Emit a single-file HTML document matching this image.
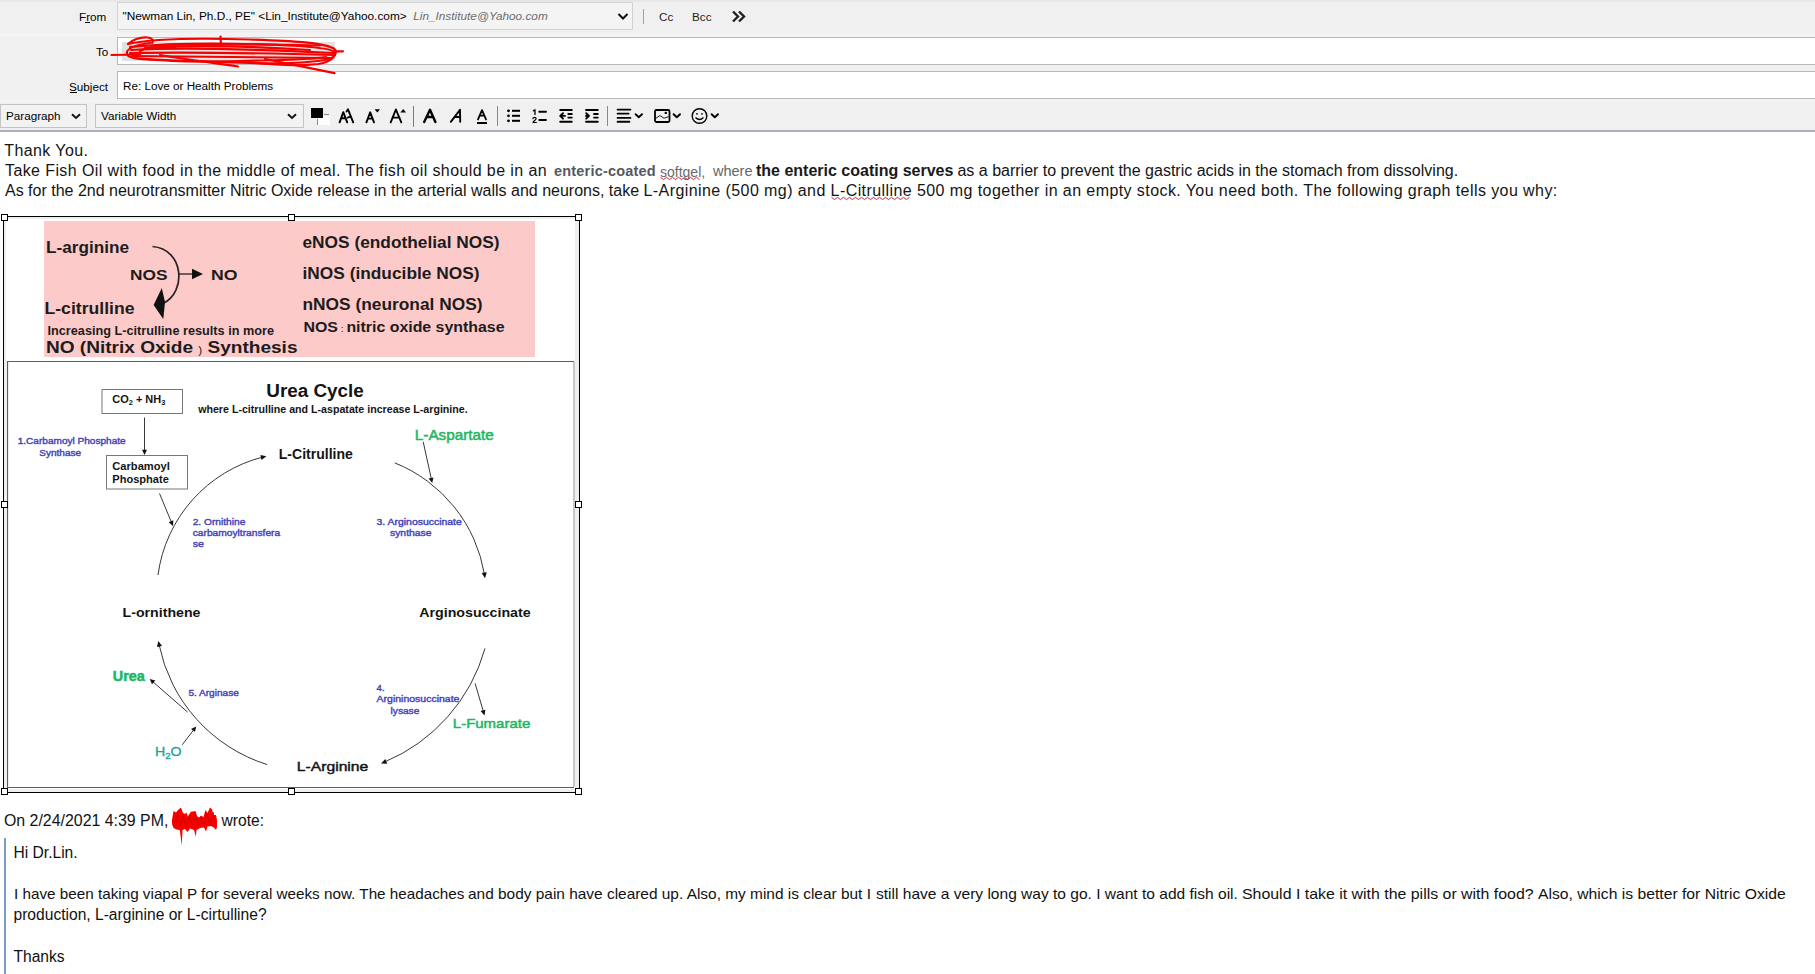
<!DOCTYPE html>
<html><head><meta charset="utf-8">
<style>
*{box-sizing:border-box;margin:0;padding:0}
html,body{width:1815px;height:974px;overflow:hidden;background:#fff;font-family:"Liberation Sans",sans-serif}
.abs{position:absolute;white-space:pre;line-height:1}
#hdr{position:absolute;left:0;top:0;width:1815px;height:131px;background:#f0f0f0}
#hdrline{position:absolute;left:0;top:130px;width:1815px;height:2px;background:#abafba}
.lbl{position:absolute;font-size:11.7px;color:#000;line-height:1;white-space:pre}
.fld{position:absolute;border:1px solid #b9b9b9;background:#fff}
.sel{position:absolute;border:1px solid #c4c4c4;background:#f2f2f2}
.tb{position:absolute}
#body{position:absolute;left:0;top:132px;width:1815px}
.bt{position:absolute;left:5px;font-size:16px;color:#141414;line-height:1;white-space:pre}
.qline{position:absolute;left:0;width:1815px;height:20px}
.qline span{position:absolute;top:0;font-size:15.55px;color:#111;line-height:1;white-space:pre;transform-origin:0 0}
.q{position:absolute;font-size:15.6px;color:#111;line-height:1;white-space:pre}
</style></head><body>
<div id="hdr">
  <div class="abs" style="left:0;top:0;width:1815px;height:2px;background:#e7e7e7"></div>
  <div class="abs" style="left:0;top:33px;width:1815px;height:4px;background:#f3f3f3"></div>
  <div class="abs" style="left:0;top:99px;width:1815px;height:3px;background:#f3f3f3"></div>
  <div class="abs" style="left:0;top:128.5px;width:1815px;height:1.5px;background:#eeeef8"></div>
  <!-- From row -->
  <div class="lbl" style="left:79px;top:11px">From</div>
  <div class="abs" style="left:85px;top:22px;width:5px;height:1px;background:#000"></div>
  <div class="sel" style="left:117px;top:2px;width:516px;height:28px;background:#f4f4f4;border-color:#d2d2d2"></div>
  <div class="lbl" style="left:122.5px;top:11px;font-size:11.82px">"Newman Lin, Ph.D., PE" &lt;Lin_Institute@Yahoo.com&gt;  <span style="font-style:italic;color:#6d6d6d">Lin_Institute@Yahoo.com</span></div>
  <svg class="tb" style="left:617px;top:12px" width="12" height="9" viewBox="0 0 12 9"><path d="M1.5 2 L6 6.5 L10.5 2" fill="none" stroke="#111" stroke-width="2"/></svg>
  <div class="abs" style="left:643px;top:9px;width:1px;height:15px;background:#a0a0a0"></div>
  <div class="lbl" style="left:659px;top:11px;color:#222">Cc</div>
  <div class="lbl" style="left:692px;top:11px;color:#222">Bcc</div>
  <svg class="tb" style="left:731px;top:10px" width="16" height="13" viewBox="0 0 16 13"><path d="M2 1.5 L7 6.5 L2 11.5 M8 1.5 L13 6.5 L8 11.5" fill="none" stroke="#222" stroke-width="2.4"/></svg>
  <!-- To row -->
  <div class="lbl" style="left:96px;top:46px">To</div>
  <div class="fld" style="left:117px;top:37px;width:1710px;height:28px"></div>
  <div class="abs" style="left:122px;top:42px;width:213px;height:19px;background:#e1e1e1"></div>
  
  <!-- Subject row -->
  <div class="lbl" style="left:69px;top:81px">Subject</div>
  <div class="abs" style="left:70px;top:92px;width:7px;height:1px;background:#000"></div>
  <div class="fld" style="left:117px;top:71px;width:1710px;height:28px"></div>
  <div class="lbl" style="left:123px;top:80px">Re: Love or Health Problems</div>
  <!-- Toolbar -->
  <div class="sel" style="left:0px;top:104px;width:87px;height:24px"></div>
  <div class="lbl" style="left:6px;top:110px">Paragraph</div>
  <svg class="tb" style="left:70.5px;top:113px" width="10" height="7" viewBox="0 0 10 7"><path d="M1 1.2 L5 5 L9 1.2" fill="none" stroke="#111" stroke-width="1.9"/></svg>
  <div class="sel" style="left:95px;top:104px;width:209px;height:24px"></div>
  <div class="lbl" style="left:101px;top:110px">Variable Width</div>
  <svg class="tb" style="left:287px;top:113px" width="10" height="7" viewBox="0 0 10 7"><path d="M1 1.2 L5 5 L9 1.2" fill="none" stroke="#111" stroke-width="1.9"/></svg>
  <!-- colour picker -->
  <div class="abs" style="left:318px;top:116px;width:12px;height:9px;background:#fff"></div>
  <div class="abs" style="left:311px;top:108px;width:12px;height:10px;background:#000"></div>
  <div class="abs" style="left:324px;top:114px;width:5px;height:1px;background:#888"></div>
  <div class="abs" style="left:317px;top:119px;width:1px;height:6px;background:#888"></div>
  <svg class="tb" style="left:336px;top:106px" width="400" height="22" viewBox="336 106 400 22">
    <g fill="none" stroke="#000" stroke-linecap="round" stroke-linejoin="round">
      <!-- AA -->
      <path d="M339.6 122.3 L343.3 112.2 L347.2 122.3 M341 118.2 L345.6 118.2" stroke-width="1.9"/>
      <path d="M346.6 111.5 L348 109.3 L353.2 122.3 M347.6 117.6 L349.8 116.9" stroke-width="1.9"/>
      <!-- A down -->
      <path d="M366.4 122.3 L370.2 112.3 L374 122.3 M367.8 118.6 L372.6 118.6" stroke-width="1.9"/>
      <!-- A up -->
      <path d="M390.7 122.3 L395.9 109.5 L401.3 122.3 M392.5 117.6 L399.5 117.6" stroke-width="1.9"/>
      <!-- Bold A -->
      <path d="M424.2 122 L430 109.8 L435.4 122 M427 117 L432.8 117" stroke-width="2.4"/>
      <!-- Italic A -->
      <path d="M450.8 121.8 L460 109.8 L460.2 121.8 M454.6 117 L460 117" stroke-width="1.9"/>
      <!-- Underline A -->
      <path d="M478 119.4 L482 110.2 L486 119.4 M479.6 115.6 L484.4 115.6" stroke-width="1.8"/>
    </g>
    <g fill="#000">
      <path d="M374.6 109.2 L380 109.2 L377.3 112.6 Z"/>
      <path d="M400.3 112.6 L406 112.6 L403.2 108.9 Z"/>
      <rect x="477" y="122.1" width="10" height="1.8" rx="0.5"/>
    </g>
    <rect x="413" y="105.3" width="1" height="21.5" fill="#7a7a7a"/>
    <rect x="497" y="105" width="1" height="21" fill="#888"/>
    <!-- bullet list -->
    <g fill="#000">
      <circle cx="508.5" cy="110.8" r="1.4"/><circle cx="508.5" cy="115.8" r="1.4"/><circle cx="508.5" cy="120.8" r="1.4"/>
      <rect x="512" y="109.8" width="8" height="2"/><rect x="512" y="114.8" width="8" height="2"/><rect x="512" y="119.8" width="8" height="2"/>
    </g>
    <g fill="none" stroke="#000" stroke-linecap="round" stroke-linejoin="round">
      <path d="M533.4 110.9 L535 109.8 L535 114.4" stroke-width="1.3"/>
      <path d="M532.9 118.6 C533.2 117 536.1 117 536.1 118.7 C536.1 120 533.2 121 533 122.5 L536.4 122.5" stroke-width="1.2"/>
      <path d="M539.3 111.8 L546 111.8 M539.3 120 L546 120" stroke-width="1.9"/>
      <path d="M560.2 110 L571.8 110 M568.3 114 L571.8 114 M568.3 117.6 L571.8 117.6 M560.2 121.8 L571.8 121.8" stroke-width="1.9"/>
      <path d="M563 113.2 L560.2 115.9 L563 118.7 M560.5 115.9 L565 115.9" stroke-width="1.9"/>
      <path d="M586 110 L597.8 110 M594 114 L597.8 114 M594 117.6 L597.8 117.6 M586 121.8 L597.8 121.8" stroke-width="1.9"/>
      <path d="M586.2 113.2 L589 115.9 L586.2 118.7 M586 115.9 L588.6 115.9" stroke-width="1.9"/>
    </g>
    <rect x="607" y="105" width="1" height="21" fill="#888"/>
    <!-- align -->
    <g fill="none" stroke="#000" stroke-linecap="round" stroke-width="1.9">
      <path d="M617.6 109.6 L630.4 109.6 M617.6 113.6 L628.6 113.6 M617.6 117.9 L630.4 117.9 M617.6 121.8 L629.4 121.8"/>
      <path d="M635.6 114.2 L638.8 117.2 L642 114.2"/>
    </g>
    <!-- image -->
    <rect x="655" y="110" width="14.5" height="12" rx="1.5" fill="none" stroke="#000" stroke-width="1.8"/>
    <path d="M656 118.2 L659.8 115.6 L664 118.2 L668.8 116.6" fill="none" stroke="#000" stroke-width="0.9"/>
    <circle cx="665.8" cy="112.9" r="1.2" fill="#000"/>
    <path d="M673.6 114.2 L676.8 117.2 L680 114.2" fill="none" stroke="#000" stroke-width="1.9" stroke-linecap="round" stroke-linejoin="round"/>
    <!-- emoji -->
    <circle cx="699.5" cy="116" r="7.3" fill="none" stroke="#000" stroke-width="1.4"/>
    <circle cx="697" cy="113.8" r="0.9" fill="#000"/><circle cx="702" cy="113.8" r="0.9" fill="#000"/>
    <path d="M695.5 117.5 Q699.5 121.5 703.5 117.5" fill="none" stroke="#000" stroke-width="1.3"/>
    <path d="M711.6 114.2 L714.8 117.2 L718 114.2" fill="none" stroke="#000" stroke-width="1.9" stroke-linecap="round" stroke-linejoin="round"/>
  </svg>
<svg class="tb" style="left:105px;top:32px" width="250" height="46" viewBox="105 32 250 46">
    <g fill="none" stroke="#f40000" stroke-width="2.2" stroke-linecap="round" stroke-linejoin="round">
      <path d="M111.5 55 L140 54.5"/>
      <path d="M128 44 C132 40 140 37 147 37.5 C153 38 154 41 152 43"/>
      <path d="M128 44 C150 39 200 38 250 39.5 C290 41 320 42 333 48 C338 51 336 56 330 59 C310 63 280 64 250 63 C200 62 160 61 140 59 C130 58 126 56 127 52 C128 48 135 45 150 43"/>
      <path d="M130 47 C180 42 240 43 300 46 C325 48 333 50 334 52"/>
      <path d="M131 50 C180 47 250 49 334 53"/>
      <path d="M130 53 C190 52 260 53 335 55"/>
      <path d="M132 56 C190 56 260 57 330 58"/>
      <path d="M135 58 C170 61 200 62 240 61 C280 60 310 60 326 57"/>
      <path d="M145 48 C190 45 250 46 310 50"/>
      <path d="M160 45 C210 44 260 44 320 45.5"/>
      <path d="M220.5 36.5 L221 46"/>
      <path d="M160 55 C190 60 215 63 238 66.5"/>
      <path d="M265 59 C290 64 315 69 334.5 73.2"/>
      <path d="M240 61 C270 65 300 66 318 64 C330 62 335 57 335 52"/>
      <path d="M334 51.3 L343 51.3"/>
      <path d="M140 51 C150 45 160 48 175 47"/>
    </g>
  </svg>
</div>
<div id="hdrline"></div>

<!-- Body text -->
<div class="bt" style="left:4.3px;top:143px;letter-spacing:0.4px">Thank You.</div>
<div class="bt" style="top:163px"><span style="letter-spacing:0.4px">Take Fish Oil with food in the middle of meal. The fish oil should be in an</span></div>
<div class="abs" style="left:554px;top:164px;font-size:14.5px;font-weight:bold;color:#555860;letter-spacing:0.2px">enteric-coated</div>
<div class="abs" style="left:660px;top:164.5px;font-size:14px;color:#6a6a6a">softgel,</div>
<svg class="tb" style="left:0;top:0" width="1815" height="220" viewBox="0 0 1815 220"><path d="M660.5 177.3 L663.5 179.6 L666.5 177.3 L669.5 179.6 L672.5 177.3 L675.5 179.6 L678.5 177.3 L681.5 179.6 L684.5 177.3 L687.5 179.6 L690.5 177.3 L693.5 179.6 L696.5 177.3 L699.5 179.6" fill="none" stroke="#c42a3a" stroke-width="1"/></svg>
<div class="abs" style="left:713px;top:164px;font-size:14.5px;color:#666">where</div>
<div class="bt" style="left:756px;top:163px;font-weight:bold;color:#1a1a1a">the enteric coating serves</div>
<div class="bt" style="left:953px;top:163px"> as a barrier to prevent the gastric acids in the stomach from dissolving.</div>
<div class="bt" style="top:183px">As for the 2nd neurotransmitter Nitric Oxide release in the arterial walls and neurons, take <span style="letter-spacing:0.42px">L-Arginine (500 mg) and L-Citrulline 500 mg together in an empty stock. You need both. The following graph tells you why:</span></div>
<svg class="tb" style="left:0;top:0" width="1815" height="220" viewBox="0 0 1815 220"><path d="M831.5 197.3 L834.5 199.6 L837.5 197.3 L840.5 199.6 L843.5 197.3 L846.5 199.6 L849.5 197.3 L852.5 199.6 L855.5 197.3 L858.5 199.6 L861.5 197.3 L864.5 199.6 L867.5 197.3 L870.5 199.6 L873.5 197.3 L876.5 199.6 L879.5 197.3 L882.5 199.6 L885.5 197.3 L888.5 199.6 L891.5 197.3 L894.5 199.6 L897.5 197.3 L900.5 199.6 L903.5 197.3 L906.5 199.6 L909.5 197.3" fill="none" stroke="#c42a3a" stroke-width="1"/></svg>

<!-- IMAGE -->
<div id="img" class="abs" style="left:4px;top:217px;width:575px;height:575px;background:#efefef">
  <div class="abs" style="left:1.5px;top:2px;width:569px;height:570px;background:#fff"></div>
</div>
<svg class="tb" style="left:0;top:0" width="600" height="800" viewBox="0 0 600 800">
  <rect x="44" y="221" width="491" height="136" fill="#fdcaca"/>
  <g font-family="Liberation Sans" font-weight="bold" fill="#1c1c1c" lengthAdjust="spacing">
    <text x="46" y="252.5" font-size="17" textLength="83" lengthAdjust="spacingAndGlyphs">L-arginine</text>
    <text x="130" y="279.5" font-size="15" textLength="37.5" lengthAdjust="spacingAndGlyphs">NOS</text>
    <text x="211" y="279.5" font-size="15" textLength="26.5" lengthAdjust="spacingAndGlyphs">NO</text>
    <text x="44.5" y="314" font-size="16.8" textLength="90" lengthAdjust="spacingAndGlyphs">L-citrulline</text>
    <text x="47.5" y="334.5" font-size="12.3" textLength="226.5" lengthAdjust="spacingAndGlyphs">Increasing L-citrulline results in more</text>
    <text x="46" y="353.3" font-size="16.4" textLength="251.5" lengthAdjust="spacingAndGlyphs">NO (Nitrix Oxide <tspan font-size="10" font-weight="normal" dy="1">)</tspan><tspan dy="-1"> Synthesis</tspan></text>
    <text x="302.5" y="247.6" font-size="16.5" textLength="197" lengthAdjust="spacingAndGlyphs">eNOS (endothelial NOS)</text>
    <text x="302.5" y="279" font-size="16.5" textLength="177" lengthAdjust="spacingAndGlyphs">iNOS (inducible NOS)</text>
    <text x="302.5" y="310" font-size="16.5" textLength="180" lengthAdjust="spacingAndGlyphs">nNOS (neuronal NOS)</text>
    <text x="303.5" y="331.5" font-size="14.1" textLength="201" lengthAdjust="spacingAndGlyphs">NOS<tspan font-size="9" font-weight="normal"> : </tspan>nitric oxide synthase</text>
  </g>
  <path d="M152.5 246.5 C184 249 187 292 163 303.5" fill="none" stroke="#2a2326" stroke-width="1.7"/>
  <path d="M161.8 288 L165 302 L163.3 319 L153.6 305 Z" fill="#111"/>
  <path d="M178 274 L193 274" stroke="#222" stroke-width="1.3"/>
  <path d="M192 268.8 L203 274 L192 279.2 Z" fill="#111"/>

  <!-- urea box -->
  <path d="M574 361.5 L7.5 361.5 L7.5 787.5 L574 787.5" fill="none" stroke="#5e5e5e" stroke-width="1.2"/><path d="M574 362 L574 787" stroke="#a9a9a9" stroke-width="1.3"/>
  <rect x="102" y="389.5" width="80.5" height="24" fill="#fff" stroke="#777" stroke-width="1"/>
  <rect x="106.5" y="455.5" width="81" height="33.5" fill="#fff" stroke="#777" stroke-width="1"/>
  <g font-family="Liberation Sans" font-weight="bold" fill="#141414" lengthAdjust="spacingAndGlyphs">
    <text x="112.3" y="402.8" font-size="11" textLength="53" lengthAdjust="spacingAndGlyphs">CO<tspan font-size="7.5" dy="2.5">2</tspan><tspan dy="-2.5"> + NH</tspan><tspan font-size="7.5" dy="2.5">3</tspan></text>
    <text x="112.3" y="469.5" font-size="11" textLength="57.5" lengthAdjust="spacingAndGlyphs">Carbamoyl</text>
    <text x="112.3" y="482.5" font-size="11" textLength="56.5" lengthAdjust="spacingAndGlyphs">Phosphate</text>
    <text x="266.3" y="396.8" font-size="18.3" textLength="97.5" lengthAdjust="spacingAndGlyphs">Urea Cycle</text>
    <text x="198.2" y="412.9" font-size="10.3" textLength="269.5" lengthAdjust="spacingAndGlyphs">where L-citrulline and L-aspatate increase L-arginine.</text>
    <text x="278.8" y="458.9" font-size="13.8" textLength="74" lengthAdjust="spacingAndGlyphs">L-Citrulline</text>
    <text x="122.5" y="616.5" font-size="13.4" textLength="78" lengthAdjust="spacingAndGlyphs">L-ornithene</text>
    <text x="419.2" y="616.5" font-size="13.4" textLength="111.5" lengthAdjust="spacingAndGlyphs">Arginosuccinate</text>
    <text x="296.8" y="771.3" font-size="13.4" font-weight="normal" stroke="#141414" stroke-width="0.45" textLength="71.5" lengthAdjust="spacingAndGlyphs">L-Arginine</text>
  </g>
  <g font-family="Liberation Sans" fill="#1db764" stroke="#1db764" stroke-width="0.5">
    <text x="414.8" y="440" font-size="14" textLength="79" lengthAdjust="spacingAndGlyphs">L-Aspartate</text>
    <text x="112.8" y="680.8" font-size="13.8" font-weight="bold" textLength="32" lengthAdjust="spacingAndGlyphs">Urea</text>
    <text x="452.8" y="728.2" font-size="13.4" textLength="77.5" lengthAdjust="spacingAndGlyphs">L-Fumarate</text>
  </g>
  <text x="155" y="756.2" font-family="Liberation Sans" font-size="13.4" fill="#1ba39b" stroke="#1ba39b" stroke-width="0.35" textLength="26.5" lengthAdjust="spacingAndGlyphs">H<tspan font-size="9" dy="3">2</tspan><tspan dy="-3">O</tspan></text>
  <g font-family="Liberation Sans" fill="#4242b8" stroke="#4242b8" stroke-width="0.4" font-size="9.6">
    <text x="17.7" y="444.4" textLength="108" lengthAdjust="spacingAndGlyphs">1.Carbamoyl Phosphate</text>
    <text x="39.2" y="455.7" textLength="42" lengthAdjust="spacingAndGlyphs">Synthase</text>
    <text x="192.7" y="525" textLength="52.7" lengthAdjust="spacingAndGlyphs">2. Ornithine</text>
    <text x="192.7" y="536.3" textLength="87.5" lengthAdjust="spacingAndGlyphs">carbamoyltransfera</text>
    <text x="192.7" y="547.2" textLength="11.2" lengthAdjust="spacingAndGlyphs">se</text>
    <text x="376.5" y="525" textLength="85.3" lengthAdjust="spacingAndGlyphs">3. Arginosuccinate</text>
    <text x="390" y="535.8" textLength="41.5" lengthAdjust="spacingAndGlyphs">synthase</text>
    <text x="376.6" y="690.8" textLength="8">4.</text>
    <text x="376.6" y="702.3" textLength="82.8" lengthAdjust="spacingAndGlyphs">Argininosuccinate</text>
    <text x="390.6" y="713.8" textLength="28.7" lengthAdjust="spacingAndGlyphs">lysase</text>
    <text x="188.4" y="696" textLength="50.4" lengthAdjust="spacingAndGlyphs">5. Arginase</text>
  </g>
  <g fill="none" stroke="#383838" stroke-width="1">
    <path d="M158.0 575.0 A141.0 141.0 0 0 1 263.0 457.0"/>
    <path d="M394.8 462.9 A146.0 146.0 0 0 1 484.5 574.7"/>
    <path d="M485.0 648.4 A174.2 174.2 0 0 1 384.3 762.1"/>
    <path d="M267.2 764.6 A158.9 158.9 0 0 1 159.0 644.4"/>
    <path d="M144.5 417.5 L144.5 451.5"/>
    <path d="M159.5 493.5 L171.7 522.8"/>
    <path d="M423.2 441.8 L431.5 479.6"/>
    <path d="M475.1 683.4 L483.5 712.0"/>
    <path d="M187.5 712.0 L152.3 681.3"/>
    <path d="M182.2 744.8 L194.1 729.3"/>
  </g>
  <g fill="#111">
    <path d="M266.4 456.2 L261.5 459.9 L260.4 454.9 Z"/>
    <path d="M485.0 578.2 L481.7 573.0 L486.8 572.3 Z"/>
    <path d="M381.0 763.4 L385.3 758.9 L387.2 763.8 Z"/>
    <path d="M158.4 641.0 L162.0 646.0 L156.9 647.0 Z"/>
    <path d="M144.5 455.0 L142.0 449.8 L147.0 449.8 Z"/>
    <path d="M173.0 526.0 L168.7 522.2 L173.3 520.2 Z"/>
    <path d="M432.2 483.0 L428.6 478.5 L433.5 477.4 Z"/>
    <path d="M484.5 715.4 L480.6 711.1 L485.4 709.7 Z"/>
    <path d="M149.7 679.0 L155.3 680.5 L152.0 684.3 Z"/>
    <path d="M196.2 726.5 L195.0 732.1 L191.1 729.1 Z"/>
  </g>
  <!-- selection frame -->
  <rect x="3.5" y="216.5" width="576" height="576" fill="none" stroke="#000" stroke-width="1"/>
  <g fill="#fff" stroke="#000" stroke-width="1">
    <rect x="1.5" y="214.5" width="6" height="6"/><rect x="288.5" y="214.5" width="6" height="6"/><rect x="575.5" y="214.5" width="6" height="6"/>
    <rect x="1.5" y="501.5" width="6" height="6"/><rect x="575.5" y="501.5" width="6" height="6"/>
    <rect x="1.5" y="788.5" width="6" height="6"/><rect x="288.5" y="788.5" width="6" height="6"/><rect x="575.5" y="788.5" width="6" height="6"/>
  </g>
</svg>

<!-- quote -->
<div class="q" style="left:4px;top:813px;font-size:15.9px">On 2/24/2021 4:39 PM,</div>
<svg class="tb" style="left:165px;top:802px" width="60" height="48" viewBox="165 802 60 48">
  <path d="M172 820 L173.5 811 L176 812.5 L178 810 L181 807.5 L183 813 L185 814 L186.5 812.5 L188 817 L190.5 812 L193 811.5 L195.5 811 L197 816 L199 817.5 L201 815.5 L203.5 817 L205.5 810 L207.5 813 L210 807.5 L212.2 809.5 L213 815 L216 815 L217 820 L217 827 L216 830 L214 827.5 L211 826 L207.5 826.5 L206 831.5 L204 827.5 L200 828 L196.5 830 L195.8 836.8 L194 830 L190 828.5 L187.5 832 L185 829 L182.5 830 L181.8 845.5 L179.8 830 L176.5 829.5 L173.5 828 L172 824 Z" fill="#f60000"/>
  <g fill="none" stroke="#e00000" stroke-width="1.2">
    <path d="M175 826 L178 813 L180 826 L183 815 L186 827 L189 816 L192 826 L195 814 L198 826 L201 818 L204 826 L207 814 L210 826 L213 812 L215 826"/>
  </g>
</svg>
<div class="q" style="left:221.5px;top:813px">wrote:</div>
<div class="abs" style="left:4px;top:838px;width:2px;height:136px;background:#7b9dc8"></div>
<div class="q" style="left:13.5px;top:845px">Hi Dr.Lin.</div>
<div class="qline" style="top:886px"><span style="left:13.6px;transform:scaleX(0.9809)">I have been taking viapal P for several weeks now. The headaches </span><span style="left:468.3px;transform:scaleX(0.9920)">and body pain have cleared up. Also, my mind is clear but I </span><span style="left:875.5px;transform:scaleX(0.9994)">still have a very long way to go. I want to add fish oil. </span><span style="left:1241.7px;transform:scaleX(1.0224)">Should I take it with the pills or with food? </span><span style="left:1537.7px;transform:scaleX(1.0099)">Also, which is better for Nitric Oxide</span></div>
<div class="q" style="left:13.5px;top:907px">production, L-arginine or L-cirtulline?</div>
<div class="q" style="left:13.5px;top:949px">Thanks</div>
</body></html>
